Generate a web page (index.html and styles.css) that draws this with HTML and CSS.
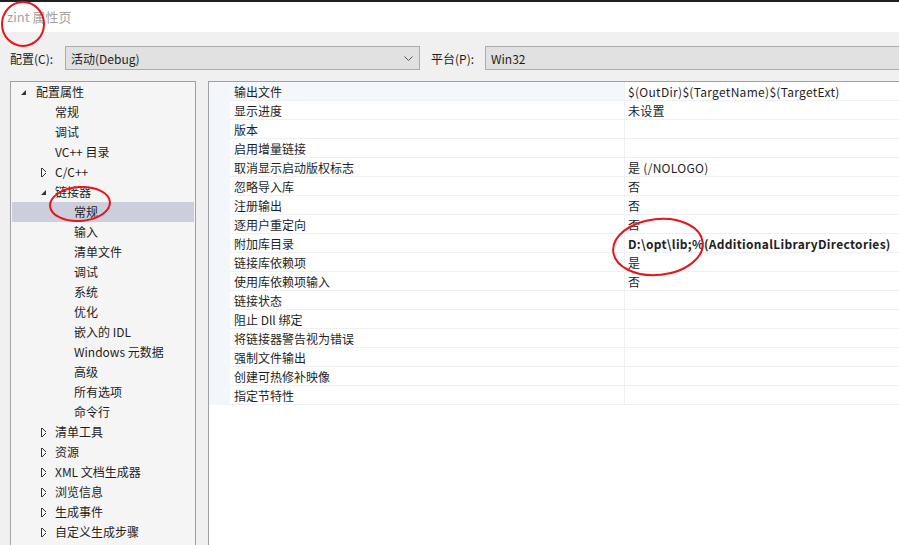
FILE: index.html
```html
<!doctype html>
<html lang="zh-CN">
    <head>
        <meta charset="UTF-8">
        <title>zint 属性页</title>
        <link rel="stylesheet" href="styles.css">
    </head>
    <body>
        <div class="topbar"></div>
        <header class="title">zint 属性页</header>

        <div class="toolbar">
            <span class="label">配置(C):</span>
            <div class="combo combo--config">
                <span>活动(Debug)</span>
                <svg class="chevron" width="9" height="5" viewBox="0 0 9 5"><path d="M0.5 0.5 L4.5 4.5 L8.5 0.5" fill="none" stroke="#555" stroke-width="1"/></svg>
            </div>
            <span class="label label--platform">平台(P):</span>
            <div class="combo combo--platform"><span>Win32</span></div>
        </div>

        <div class="main">
            <nav class="tree">
                <div class="node lvl-1"><i class="arrow open"></i>配置属性</div>
                <div class="node lvl-2">常规</div>
                <div class="node lvl-2">调试</div>
                <div class="node lvl-2">VC++ 目录</div>
                <div class="node lvl-2"><i class="arrow closed"></i>C/C++</div>
                <div class="node lvl-2"><i class="arrow open"></i>链接器</div>
                <div class="node lvl-3 node--selected">常规</div>
                <div class="node lvl-3">输入</div>
                <div class="node lvl-3">清单文件</div>
                <div class="node lvl-3">调试</div>
                <div class="node lvl-3">系统</div>
                <div class="node lvl-3">优化</div>
                <div class="node lvl-3">嵌入的 IDL</div>
                <div class="node lvl-3">Windows 元数据</div>
                <div class="node lvl-3">高级</div>
                <div class="node lvl-3">所有选项</div>
                <div class="node lvl-3">命令行</div>
                <div class="node lvl-2"><i class="arrow closed"></i>清单工具</div>
                <div class="node lvl-2"><i class="arrow closed"></i>资源</div>
                <div class="node lvl-2"><i class="arrow closed"></i>XML 文档生成器</div>
                <div class="node lvl-2"><i class="arrow closed"></i>浏览信息</div>
                <div class="node lvl-2"><i class="arrow closed"></i>生成事件</div>
                <div class="node lvl-2"><i class="arrow closed"></i>自定义生成步骤</div>
            </nav>

            <div class="grid">
                <div class="row row--current"><span class="name">输出文件</span><span class="value">$(OutDir)$(TargetName)$(TargetExt)</span></div>
                <div class="row"><span class="name">显示进度</span><span class="value">未设置</span></div>
                <div class="row"><span class="name">版本</span><span class="value"></span></div>
                <div class="row"><span class="name">启用增量链接</span><span class="value"></span></div>
                <div class="row"><span class="name">取消显示启动版权标志</span><span class="value">是 (/NOLOGO)</span></div>
                <div class="row"><span class="name">忽略导入库</span><span class="value">否</span></div>
                <div class="row"><span class="name">注册输出</span><span class="value">否</span></div>
                <div class="row"><span class="name">逐用户重定向</span><span class="value">否</span></div>
                <div class="row"><span class="name">附加库目录</span><span class="value value--bold">D:\opt\lib;%(AdditionalLibraryDirectories)</span></div>
                <div class="row"><span class="name">链接库依赖项</span><span class="value">是</span></div>
                <div class="row"><span class="name">使用库依赖项输入</span><span class="value">否</span></div>
                <div class="row"><span class="name">链接状态</span><span class="value"></span></div>
                <div class="row"><span class="name">阻止 Dll 绑定</span><span class="value"></span></div>
                <div class="row"><span class="name">将链接器警告视为错误</span><span class="value"></span></div>
                <div class="row"><span class="name">强制文件输出</span><span class="value"></span></div>
                <div class="row"><span class="name">创建可热修补映像</span><span class="value"></span></div>
                <div class="row"><span class="name">指定节特性</span><span class="value"></span></div>
            </div>
        </div>

        <!-- hand-drawn annotation marks over the screenshot -->
        <svg class="marks" width="899" height="545" viewBox="0 0 899 545">
            <ellipse cx="23" cy="24" rx="21" ry="22" />
            <ellipse cx="80" cy="204" rx="30" ry="17" transform="rotate(-4 80 204)" />
            <ellipse cx="658" cy="247" rx="45" ry="28" transform="rotate(-6 658 247)" />
        </svg>
    </body>
</html>
```

FILE: styles.css
```css
/* base */
:root {
    --text: #1e1e1e;
    --panel-border: #a0a0a0;
    --line: #eef0f4;
}

*,
*::before,
*::after {
    box-sizing: border-box;
    padding: 0;
    margin: 0;
}

body {
    position: relative;
    width: 899px;
    height: 545px;
    overflow: hidden;
    font-family: "Noto Sans CJK SC", "Noto Sans", sans-serif;
    font-size: 12px;
    color: var(--text);
    background-color: #f0f0f0;
}

/* window top */
.topbar {
    height: 2px;
    background-color: #1f1f1f;
}

.title {
    height: 30px;
    padding-inline-start: 7px;
    font-size: 13px;
    font-weight: 400;
    line-height: 30px;
    color: #a3a3a3;
    background-color: #fff;
}

/* toolbar */
.toolbar {
    display: flex;
    align-items: center;
    height: 49px;
    padding-block-end: 11px;
    padding-block-start: 14px;
    padding-inline-start: 10px;
}

.label {
    width: 55px;
}

.label--platform {
    width: 54px;
    margin-inline-start: 11px;
}

.combo {
    display: flex;
    align-items: center;
    justify-content: space-between;
    height: 24px;
    padding-inline: 5px 6px;
    border: 1px solid #adadad;
    background-color: #e1e1e1;
}

.combo--config {
    width: 355px;
}

.combo--platform {
    width: 430px;
    margin-inline-end: -20px;
}

.chevron {
    display: block;
}

/* panels */
.main {
    display: flex;
    gap: 12px;
    height: 464px;
    padding-inline-start: 10px;
}

.tree {
    flex: none;
    width: 186px;
    height: 480px;
    padding: 0 1px;
    border: 1px solid var(--panel-border);
    background-color: #f5f5f5;
}

.node {
    position: relative;
    height: 20px;
    line-height: 20px;
    white-space: nowrap;
}

.lvl-1 {
    padding-inline-start: 24px;
}

.lvl-2 {
    padding-inline-start: 43px;
}

.lvl-3 {
    padding-inline-start: 62px;
}

.node--selected {
    background-color: #cccedb;
}

.arrow {
    position: absolute;
    top: 6px;
}

.lvl-1 .arrow {
    left: 9px;
}

.lvl-2 .arrow {
    left: 29px;
}

/* expanded: small filled corner triangle */
.arrow.open {
    top: 8px;
    width: 0;
    height: 0;
    border-left: 5px solid transparent;
    border-bottom: 5px solid #333;
}

/* collapsed: outlined right triangle */
.arrow.closed {
    width: 5px;
    height: 9px;
    background:
        linear-gradient(to top right, transparent 48%, #333 49%, #333 60%, transparent 61%) top / 5px 5px no-repeat,
        linear-gradient(to bottom right, transparent 48%, #333 49%, #333 60%, transparent 61%) bottom / 5px 5px no-repeat;
    border-left: 1px solid #333;
}

.grid {
    flex: 1;
    height: 480px;
    margin-inline-end: -4px;
    border: 1px solid var(--panel-border);
    background-color: #fff;
}

.row {
    display: grid;
    grid-template-columns: 21px 394px 1fr;
    height: 19px;
    line-height: 17px;
}

.row::before {
    content: "";
    background-color: #f3f6fb;
}

.name,
.value {
    padding-block-start: 1px;
    white-space: nowrap;
    border-block-end: 1px solid var(--line);
}

.name {
    padding-inline-start: 4px;
}

.value {
    padding-inline-start: 3px;
    letter-spacing: 0.3px;
    border-inline-start: 1px solid var(--line);
}

.row--current .name {
    background-color: #f4f7fb;
}

.value--bold {
    font-weight: 700;
}

/* annotations */
.marks {
    position: absolute;
    top: 0;
    left: 0;
    pointer-events: none;
}

.marks ellipse {
    fill: none;
    stroke: #e8141a;
    stroke-width: 2;
}
```
